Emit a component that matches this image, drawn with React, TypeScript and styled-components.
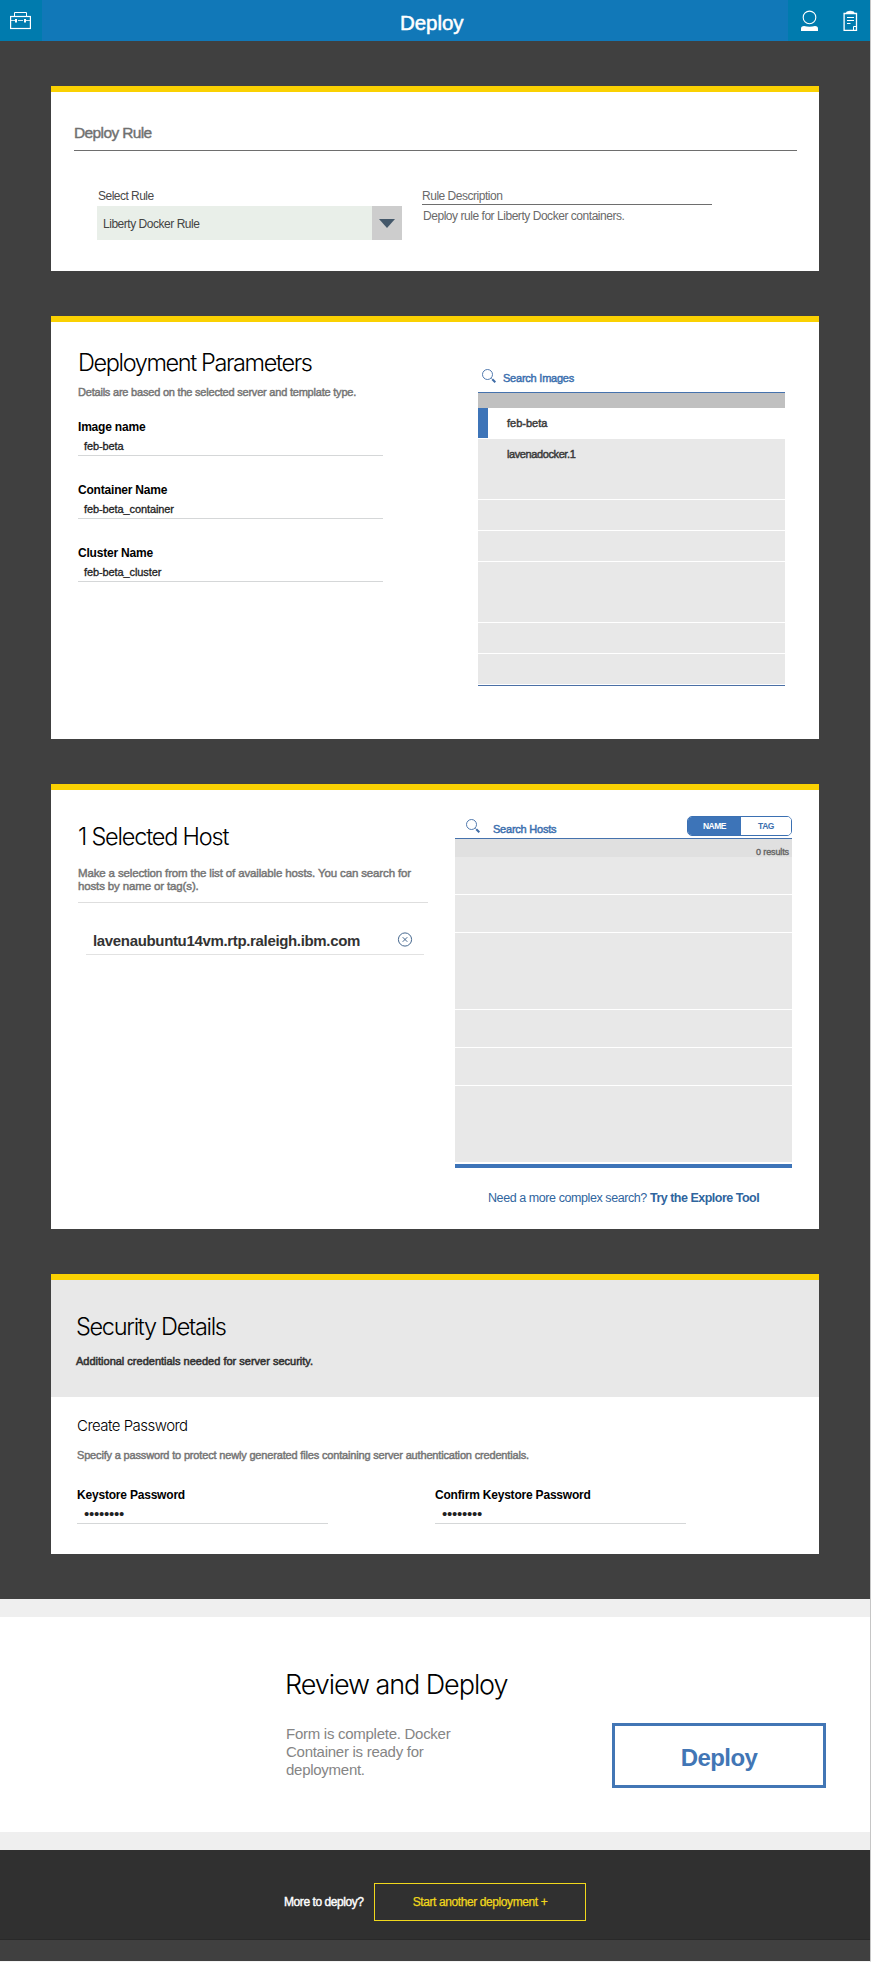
import React from "react";
import styled, { createGlobalStyle, css } from "styled-components";

const GlobalStyle = createGlobalStyle`
  * { box-sizing: border-box; }
  body { margin: 0; background: #fff; }
  h1, h2, h3, p { margin: 0; }
  button { padding: 0; cursor: pointer; }
`;

const sans = `"Liberation Sans", Arial, sans-serif`;
const light = `Inter, "Liberation Sans", sans-serif`;

const type = (size: number, weight: number, line: number, spacing = 0) => css`
  font-family: ${weight < 400 ? light : sans};
  font-size: ${size}px;
  font-weight: ${weight};
  line-height: ${line}px;
  letter-spacing: ${spacing}px;
  white-space: nowrap;
`;

/* Thickens regular text to a medium weight */
const medium = (width = 0.45) => css`
  -webkit-text-stroke: ${width}px currentColor;
`;

const Page = styled.div`
  width: 871px;
  height: 1962px;
  border-right: 1px solid #c6c6c6;
  border-bottom: 1px solid #f4f4f4;
  background: #404040;
`;

/* Header */
const Header = styled.header`
  display: flex;
  height: 41px;
  background: #1178b8;
`;
const HeaderTile = styled.div<{ $width: number }>`
  display: flex;
  width: ${(p) => p.$width}px;
  background: #007bae;
`;
const HeaderTitle = styled.h1`
  ${type(20.5, 400, 24, -0.05)}
  ${medium(0.5)}
  flex: 1;
  padding: 11px 0 0 358px;
  color: #fff;
`;
const CaseIcon = styled.svg`
  display: block;
  margin: 12px 0 0 10px;
`;
const UserIcon = styled.svg`
  display: block;
  margin: 10px 0 0 13px;
`;
const ClipIcon = styled.svg`
  display: block;
  margin: 10px 0 0 24px;
`;

/* Cards */
const Main = styled.main`
  display: flex;
  flex-direction: column;
  gap: 45px;
  padding: 45px 51px;
`;
const Card = styled.section<{ $height: number }>`
  height: ${(p) => p.$height}px;
  border-top: 6px solid #fad102;
  background: #fff;
`;
const RuleCard = styled(Card)`
  padding: 32px 22px 0 23px;
`;
const SplitCard = styled(Card)`
  display: flex;
  justify-content: space-between;
`;
const SectionTitle = styled.h2<{ $spacing?: number }>`
  ${type(23.5, 300, 28)}
  letter-spacing: ${(p) => p.$spacing ?? -1.25}px;
  color: #000;
`;

const RuleHeading = styled.h2`
  ${type(15.5, 400, 18, -0.62)}
  ${medium(0.4)}
  padding-bottom: 8px;
  border-bottom: 1px solid #6e6e6e;
  color: #707070;
`;
const RuleRow = styled.div`
  display: flex;
  gap: 20px;
  margin-top: 38px;
  padding-left: 23px;
`;
const RuleLabel = styled.div`
  ${type(12, 400, 14, -0.52)}
  padding-left: 1px;
  color: #4a4a4a;
`;
const Select = styled.div`
  display: flex;
  width: 305px;
  height: 34px;
  margin-top: 3px;
  background: #e9efe9;
`;
const SelectValue = styled.div`
  ${type(12, 400, 36, -0.47)}
  flex: 1;
  padding-left: 6px;
  color: #444;
`;
const SelectArrow = styled.div`
  display: flex;
  align-items: center;
  justify-content: center;
  width: 30px;
  background: #cdcdcd;
`;
const DescriptionLabel = styled.div`
  ${type(12, 400, 14, -0.48)}
  width: 290px;
  padding-bottom: 1px;
  border-bottom: 1px solid #6e6e6e;
  color: #6a6a6a;
`;
const Description = styled.p`
  ${type(12, 400, 14, -0.46)}
  margin-top: 4px;
  padding-left: 1px;
  color: #6a6a6a;
`;

/* Form fields */
const FormColumn = styled.div`
  padding: 27px 0 0 27px;
`;
const Hint = styled.p`
  ${type(11, 400, 14, -0.21)}
  ${medium()}
  margin: 8px 0 21px;
  color: #757575;
`;
const Field = styled.div<{ $width: number }>`
  width: ${(p) => p.$width}px;
  margin-bottom: 27px;
  border-bottom: 1px solid #d5d7d8;
`;
const FieldLabel = styled.div`
  ${type(12, 700, 14, -0.2)}
  color: #000;
`;
const FieldValue = styled.div`
  ${type(11, 400, 14, -0.1)}
  ${medium(0.3)}
  margin-top: 5px;
  padding: 0 0 2px 6px;
  height: 16px;
  color: #222;
`;
const MaskedValue = styled(FieldValue)`
  padding-left: 7px;
  font-size: 15px;
  letter-spacing: -0.25px;
  -webkit-text-stroke: 0;
`;

/* Search lists */
const ImagePanel = styled.div`
  width: 307px;
  margin: 45px 34px 0 0;
`;
const HostPanel = styled.div`
  width: 337px;
  margin: 26px 27px 0 0;
`;
const SearchBar = styled.div<{ $height: number; $indent: number }>`
  display: flex;
  align-items: flex-start;
  height: ${(p) => p.$height}px;
  padding-left: ${(p) => p.$indent}px;
  border-bottom: 1px solid #4572ad;
`;
const SearchGlyph = styled.svg<{ $top: number }>`
  display: block;
  flex: none;
  margin-top: ${(p) => p.$top}px;
`;
const SearchText = styled.div<{ $left: number; $top: number }>`
  ${type(11, 400, 14, -0.23)}
  ${medium(0.45)}
  margin: ${(p) => p.$top}px 0 0 ${(p) => p.$left}px;
  color: #3b6fae;
`;
const ListHead = styled.div`
  height: 15px;
  background: #c0c0c0;
`;
const ResultCount = styled.div`
  ${type(9, 400, 12, -0.12)}
  ${medium(0.4)}
  height: 18px;
  padding: 7px 3px 0 0;
  background: #e0e0e0;
  color: #666;
  text-align: right;
`;
const ListRow = styled.div<{ $height: number; $active?: boolean }>`
  ${type(11, 400, 14, 0)}
  ${medium(0.45)}
  height: ${(p) => p.$height}px;
  padding: 8px 0 0 29px;
  border-bottom: 1px solid #fff;
  box-shadow: ${(p) => (p.$active ? "inset 10px 0 #3d74b8" : "none")};
  background: ${(p) => (p.$active ? "#fff" : "#e8e8e8")};
  color: #3a3a3a;
  letter-spacing: ${(p) => (p.$active ? 0 : -0.4)}px;
`;
const ImageList = styled.div`
  border-bottom: 1px solid #4a6fa5;
`;
const HostList = styled.div`
  padding-bottom: 1px;
  border-bottom: 4px solid #3d74b8;
`;
const Toggle = styled.div`
  display: flex;
  width: 105px;
  height: 20px;
  margin-left: auto;
  overflow: hidden;
  border: 1px solid #3b70b2;
  border-radius: 5px;
`;
const ToggleOption = styled.button<{ $on?: boolean }>`
  ${type(8.5, 700, 17, -0.5)}
  width: ${(p) => (p.$on ? 53 : 50)}px;
  border: 0;
  background: ${(p) => (p.$on ? "#3d74b8" : "#fff")};
  color: ${(p) => (p.$on ? "#fff" : "#3d6fae")};
`;
const ExploreLine = styled.p`
  ${type(12.5, 400, 16, -0.42)}
  margin: 22px 0 0 33px;
  color: #2f659e;

  b { letter-spacing: -0.5px; }
`;

/* Hosts */
const HostColumn = styled.div`
  width: 377px;
  padding: 33px 0 0 27px;
`;
const HostHint = styled.p`
  ${type(11.5, 400, 13, -0.14)}
  ${medium()}
  margin-top: 16px;
  padding-bottom: 9px;
  border-bottom: 1px solid #dedede;
  color: #757575;
`;
const HostRow = styled.div`
  display: flex;
  justify-content: space-between;
  height: 52px;
  margin: 0 4px 0 8px;
  padding: 29px 11px 0 7px;
  border-bottom: 1px solid #e2e2e2;
`;
const HostName = styled.div`
  ${type(15, 700, 18, -0.34)}
  color: #333;
`;

/* Security */
const SecurityHead = styled.div`
  height: 117px;
  padding: 33px 0 0 25px;
  background: #e8e8e8;
`;
const SecurityNote = styled.p`
  ${type(11, 400, 14, 0)}
  ${medium(0.55)}
  margin-top: 13px;
  color: #333;
`;
const SecurityBody = styled.div`
  padding: 20px 0 0 26px;
`;
const SubTitle = styled.h3`
  ${type(15, 300, 18, -0.53)}
  color: #000;
`;
const PasswordHint = styled(Hint)`
  margin: 13px 0 26px;
  letter-spacing: -0.17px;
`;
const PasswordRow = styled.div`
  display: flex;
  gap: 107px;
`;

/* Review */
const Review = styled.section`
  height: 251px;
  padding: 52px 0 0 285px;
  border: solid #efefef;
  border-width: 18px 0;
  background: #fff;
`;
const ReviewTitle = styled.h2`
  ${type(27, 300, 32, -1.07)}
  color: #000;
`;
const ReviewRow = styled.div`
  display: flex;
  justify-content: space-between;
  margin: 22px 44px 0 0;
`;
const ReviewText = styled.p`
  ${type(15, 400, 18, -0.27)}
  padding: 2px 0 0 1px;
  color: #858585;
`;
const DeployButton = styled.button`
  ${type(24, 700, 28, -0.6)}
  width: 214px;
  height: 65px;
  padding-top: 5px;
  border: 3px solid #4276b5;
  background: #fff;
  color: #4276b5;
`;

/* Footer */
const Footer = styled.footer`
  display: flex;
  align-items: flex-start;
  height: 90px;
  padding: 33px 0 0 284px;
  border-bottom: 1px solid #292929;
  background: #303030;
`;
const FooterText = styled.div`
  ${type(12, 400, 14, -0.43)}
  ${medium(0.4)}
  width: 90px;
  padding-top: 12px;
  color: #fff;
`;
const AnotherButton = styled.button`
  ${type(12, 400, 14, -0.4)}
  ${medium(0.25)}
  width: 212px;
  height: 38px;
  border: 1px solid #f0d81c;
  background: transparent;
  color: #f0d81c;
`;

const Search = ({ top }: { top: number }) => (
  <SearchGlyph $top={top} width="14" height="14" viewBox="0 0 14 14" fill="none" stroke="#3f6ca6">
    <circle cx="5.5" cy="5.5" r="5" strokeWidth="0.9" />
    <path d="M9.3 9.3l1 1" strokeWidth="0.8" />
    <path d="M10.3 10.3l3 3" strokeWidth="2" />
  </SearchGlyph>
);

const imageRows = [61, 31, 31, 61, 31, 31];
const hostRows = [38, 38, 77, 38, 38, 77];
const parameters = [
  ["Image name", "feb-beta"],
  ["Container Name", "feb-beta_container"],
  ["Cluster Name", "feb-beta_cluster"],
];

export default function App() {
  return (
    <>
      <GlobalStyle />
      <Page>
        <Header>
          <HeaderTile $width={42}>
            <CaseIcon width="21" height="18" viewBox="0 0 21 18" fill="none" stroke="#fff">
              <path d="M4.5 4V.5h12V4" />
              <rect x=".6" y="4.5" width="19.8" height="12" strokeWidth="1.2" />
              <path d="M1 8.5h4M8 8.5h5M16 8.5h4" strokeWidth=".8" />
              <path d="M6 7v3.5M15 7v3.5" strokeWidth="2" />
            </CaseIcon>
          </HeaderTile>
          <HeaderTitle>Deploy</HeaderTitle>
          <HeaderTile $width={82}>
            <UserIcon width="18" height="22" viewBox="0 0 18 22">
              <circle cx="8.5" cy="7.4" r="6.3" fill="none" stroke="#fff" strokeWidth="1.1" />
              <path d="M0 21v-2.2Q0 16 3 16q5.5 1.6 11 0 3 0 3 2.8V21z" fill="#fff" />
            </UserIcon>
            <ClipIcon width="15" height="22" viewBox="0 0 15 22" fill="none" stroke="#fff">
              <path d="M1.1 3.5h12.4v16.8H1.1z" strokeWidth="1.3" />
              <path d="M10.5 20v-3.5h3" />
              <path d="M3.5 3.500V2q3.8-1.8 7.500 0v1.500z" fill="#fff" strokeWidth=".6" />
              <path d="M4 7.500h7M4 10.500h7M4 13.500h3.500" />
            </ClipIcon>
          </HeaderTile>
        </Header>

        <Main>
          <RuleCard $height={185}>
            <RuleHeading>Deploy Rule</RuleHeading>
            <RuleRow>
              <div>
                <RuleLabel>Select Rule</RuleLabel>
                <Select>
                  <SelectValue>Liberty Docker Rule</SelectValue>
                  <SelectArrow>
                    <svg width="16" height="9" viewBox="0 0 16 9">
                      <path d="M0 0h16L8 9z" fill="#44586a" />
                    </svg>
                  </SelectArrow>
                </Select>
              </div>
              <div>
                <DescriptionLabel>Rule Description</DescriptionLabel>
                <Description>Deploy rule for Liberty Docker containers.</Description>
              </div>
            </RuleRow>
          </RuleCard>

          <SplitCard $height={423}>
            <FormColumn>
              <SectionTitle $spacing={-1.38}>Deployment Parameters</SectionTitle>
              <Hint>Details are based on the selected server and template type.</Hint>
              {parameters.map(([label, value]) => (
                <Field key={label} $width={305}>
                  <FieldLabel>{label}</FieldLabel>
                  <FieldValue>{value}</FieldValue>
                </Field>
              ))}
            </FormColumn>
            <ImagePanel>
              <SearchBar $height={26} $indent={4}>
                <Search top={2} />
                <SearchText $left={7} $top={4}>Search Images</SearchText>
              </SearchBar>
              <ListHead />
              <ImageList>
                <ListRow $height={31} $active>feb-beta</ListRow>
                {imageRows.map((h, i) => (
                  <ListRow key={i} $height={h}>{i === 0 ? "lavenadocker.1" : null}</ListRow>
                ))}
              </ImageList>
            </ImagePanel>
          </SplitCard>

          <SplitCard $height={445}>
            <HostColumn>
              <SectionTitle $spacing={-1.2}>1 Selected Host</SectionTitle>
              <HostHint>
                Make a selection from the list of available hosts. You can search for
                <br />
                hosts by name or tag(s).
              </HostHint>
              <HostRow>
                <HostName>lavenaubuntu14vm.rtp.raleigh.ibm.com</HostName>
                <svg width="16" height="16" viewBox="0 0 16 16" fill="none" stroke="#46688f">
                  <circle cx="8" cy="7.5" r="6.6" />
                  <path d="M5.7 5.2l4.6 4.6M10.3 5.2L5.7 9.8" />
                </svg>
              </HostRow>
            </HostColumn>
            <HostPanel>
              <SearchBar $height={23} $indent={11}>
                <Search top={3} />
                <SearchText $left={13} $top={6}>Search Hosts</SearchText>
                <Toggle>
                  <ToggleOption $on>NAME</ToggleOption>
                  <ToggleOption>TAG</ToggleOption>
                </Toggle>
              </SearchBar>
              <ResultCount>0 results</ResultCount>
              <HostList>
                {hostRows.map((h, i) => (
                  <ListRow key={i} $height={h} />
                ))}
              </HostList>
              <ExploreLine>
                Need a more complex search? <b>Try the Explore Tool</b>
              </ExploreLine>
            </HostPanel>
          </SplitCard>

          <Card $height={280}>
            <SecurityHead>
              <SectionTitle $spacing={-1.3}>Security Details</SectionTitle>
              <SecurityNote>Additional credentials needed for server security.</SecurityNote>
            </SecurityHead>
            <SecurityBody>
              <SubTitle>Create Password</SubTitle>
              <PasswordHint>
                Specify a password to protect newly generated files containing server authentication credentials.
              </PasswordHint>
              <PasswordRow>
                <Field $width={251}>
                  <FieldLabel>Keystore Password</FieldLabel>
                  <MaskedValue>••••••••</MaskedValue>
                </Field>
                <Field $width={251}>
                  <FieldLabel>Confirm Keystore Password</FieldLabel>
                  <MaskedValue>••••••••</MaskedValue>
                </Field>
              </PasswordRow>
            </SecurityBody>
          </Card>
        </Main>

        <Review>
          <ReviewTitle>Review and Deploy</ReviewTitle>
          <ReviewRow>
            <ReviewText>
              Form is complete. Docker
              <br />
              Container is ready for
              <br />
              deployment.
            </ReviewText>
            <DeployButton>Deploy</DeployButton>
          </ReviewRow>
        </Review>
        <Footer>
          <FooterText>More to deploy?</FooterText>
          <AnotherButton>Start another deployment +</AnotherButton>
        </Footer>
      </Page>
    </>
  );
}
